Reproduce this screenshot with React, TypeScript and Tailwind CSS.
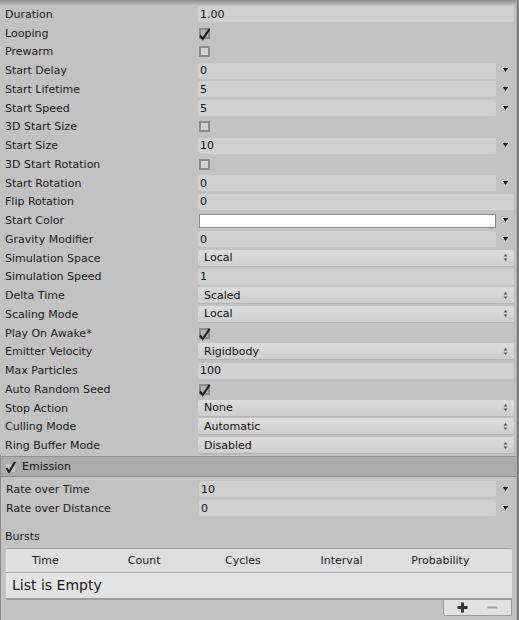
import React from 'react';

type Row =
  | { label: string; kind: 'float'; value: string }
  | { label: string; kind: 'curve'; value: string }
  | { label: string; kind: 'popup'; value: string }
  | { label: string; kind: 'check'; checked: boolean }
  | { label: string; kind: 'color' };

const rows: Row[] = [
  { label: 'Duration', kind: 'float', value: '1.00' },
  { label: 'Looping', kind: 'check', checked: true },
  { label: 'Prewarm', kind: 'check', checked: false },
  { label: 'Start Delay', kind: 'curve', value: '0' },
  { label: 'Start Lifetime', kind: 'curve', value: '5' },
  { label: 'Start Speed', kind: 'curve', value: '5' },
  { label: '3D Start Size', kind: 'check', checked: false },
  { label: 'Start Size', kind: 'curve', value: '10' },
  { label: '3D Start Rotation', kind: 'check', checked: false },
  { label: 'Start Rotation', kind: 'curve', value: '0' },
  { label: 'Flip Rotation', kind: 'float', value: '0' },
  { label: 'Start Color', kind: 'color' },
  { label: 'Gravity Modifier', kind: 'curve', value: '0' },
  { label: 'Simulation Space', kind: 'popup', value: 'Local' },
  { label: 'Simulation Speed', kind: 'float', value: '1' },
  { label: 'Delta Time', kind: 'popup', value: 'Scaled' },
  { label: 'Scaling Mode', kind: 'popup', value: 'Local' },
  { label: 'Play On Awake*', kind: 'check', checked: true },
  { label: 'Emitter Velocity', kind: 'popup', value: 'Rigidbody' },
  { label: 'Max Particles', kind: 'float', value: '100' },
  { label: 'Auto Random Seed', kind: 'check', checked: true },
  { label: 'Stop Action', kind: 'popup', value: 'None' },
  { label: 'Culling Mode', kind: 'popup', value: 'Automatic' },
  { label: 'Ring Buffer Mode', kind: 'popup', value: 'Disabled' },
];

function Checkbox({ checked }: { checked: boolean }) {
  return (
    <div
      className={
        'relative size-[11px] border-2 border-[#8b8b8b] ' + (checked ? 'bg-[#b4b4b4]' : 'bg-[#d4d4d4]')
      }
    >
      {checked && (
        <svg className="absolute -left-[2px] -top-[3px]" width="13" height="14" viewBox="0 0 13 14">
          <path d="M1 8.5 L3.8 12 L10.5 2" fill="none" stroke="#1c1c1c" strokeWidth="2.2" />
        </svg>
      )}
    </div>
  );
}

function CurveArrow() {
  return (
    <svg width="5" height="5" viewBox="0 0 5 5">
      <rect x="0" y="0" width="5" height="1" fill="#1a1a1a" />
      <polygon points="0.5,1 4.5,1 2.5,4" fill="#1a1a1a" />
    </svg>
  );
}

function PopupArrows() {
  return (
    <svg width="5" height="9" viewBox="0 0 5 9">
      <polygon points="0.5,3.5 4.5,3.5 2.5,1" fill="#5a5a5a" />
      <polygon points="0.5,5.5 4.5,5.5 2.5,8" fill="#5a5a5a" />
    </svg>
  );
}

function Field({ children }: { children: React.ReactNode }) {
  return (
    <div className="flex h-[16px] flex-1 items-center rounded-[2px] bg-[#d0d0d0] pl-[2px] text-[#111]">
      {children}
    </div>
  );
}

function PropertyRow({ row }: { row: Row }) {
  return (
    <div className="flex h-[18.75px] items-center">
      <div className="w-[198px] shrink-0 pl-[5px] text-[#1b1b1b]">{row.label}</div>
      <div className="flex flex-1 items-center pr-[2px]">
        {row.kind === 'float' && <Field>{row.value}</Field>}
        {row.kind === 'curve' && (
          <>
            <Field>{row.value}</Field>
            <div className="flex w-[18px] items-center justify-center pl-[1px]">
              <CurveArrow />
            </div>
          </>
        )}
        {row.kind === 'check' && (
          <div className="pl-[1px]">
            <Checkbox checked={row.checked} />
          </div>
        )}
        {row.kind === 'color' && (
          <>
            <div className="ml-[1px] h-[14px] flex-1 border border-[#8c8c8c] bg-white" />
            <div className="flex w-[18px] items-center justify-center pl-[1px]">
              <CurveArrow />
            </div>
          </>
        )}
        {row.kind === 'popup' && (
          <div className="flex h-[17px] flex-1 items-center justify-between rounded-[2px] border-b border-[#b4b4b4] bg-gradient-to-b from-[#dcdcdc] to-[#cecece] pl-[6px] pr-[6px] text-[#111]">
            <span>{row.value}</span>
            <PopupArrows />
          </div>
        )}
      </div>
    </div>
  );
}

export default function App() {
  return (
    <div
      className="flex h-[620px] w-[519px] overflow-hidden bg-[#c2c2c2] text-[11px] leading-none"
      style={{ fontFamily: '"DejaVu Sans", Verdana, sans-serif' }}
    >
      <div className="flex w-[516px] flex-col">
        {/* top edge */}
        <div className="h-[5px] bg-gradient-to-b from-[#8e8e8e] to-[#bcbcbc]" />

        {/* main module */}
        <div className="flex flex-col">
          {rows.map((row) => (
            <PropertyRow key={row.label} row={row} />
          ))}
        </div>

        <div className="flex flex-1 flex-col border-l border-[#8c8c8c] pt-[1px]">
          {/* Emission header */}
          <div className="flex h-[21px] items-center gap-[6px] border-y border-[#8f8f8f] bg-[#ababab] pl-[4px] text-[#111]">
            <svg width="11" height="12" viewBox="0 0 11 12">
              <rect x="1" y="3" width="9" height="8" fill="#c4c4c4" />
              <path d="M1.5 7 L4 11 L10 1" fill="none" stroke="#1c1c1c" strokeWidth="2.2" />
            </svg>
            <span>Emission</span>
          </div>

          <div className="flex flex-col pt-[3px]">
            <PropertyRow row={{ label: 'Rate over Time', kind: 'curve', value: '10' }} />
            <PropertyRow row={{ label: 'Rate over Distance', kind: 'curve', value: '0' }} />
          </div>

          {/* Bursts */}
          <div className="flex h-[18px] items-center pl-[4px] pt-[19px] text-[#1b1b1b]">Bursts</div>

          <div className="ml-[5px] mr-[4px] mt-[11px] flex flex-col">
            <div className="rounded-t-[2px] border-t border-[#a3a3a3] bg-[#dedede] shadow-[inset_1px_0_0_#f0f0f0]">
              <div className="-ml-[10px] flex h-[23px] items-center text-[#222]">
                {['Time', 'Count', 'Cycles', 'Interval', 'Probability'].map((h) => (
                  <div key={h} className="w-[98.75px] text-center">
                    {h}
                  </div>
                ))}
              </div>
            </div>
            <div className="flex h-[26px] items-center border-t border-[#a8a8a8] bg-[#e3e3e3] pl-[6px] text-[14px] text-[#1a1a1a] shadow-[0_2px_0_#9c9c9c]">
              List is Empty
            </div>
            <div className="flex justify-end">
              <div className="mt-[2px] flex h-[16px] w-[69px] items-center justify-around rounded-b-[2px] border-x border-b border-[#9a9a9a] bg-[#e1e1e1] px-[4px]">
                <svg width="11" height="11" viewBox="0 0 11 11">
                  <rect x="4" y="0.5" width="3" height="10" fill="#333" />
                  <rect x="0.5" y="4" width="10" height="3" fill="#333" />
                </svg>
                <svg width="11" height="11" viewBox="0 0 11 11">
                  <rect x="0.5" y="4.5" width="10" height="2" fill="#a0a0a0" />
                </svg>
              </div>
            </div>
          </div>
        </div>
      </div>

      {/* right edge */}
      <div className="w-[3px] border-l border-[#a9a9a9] bg-[#7e7e7e]" />
    </div>
  );
}
